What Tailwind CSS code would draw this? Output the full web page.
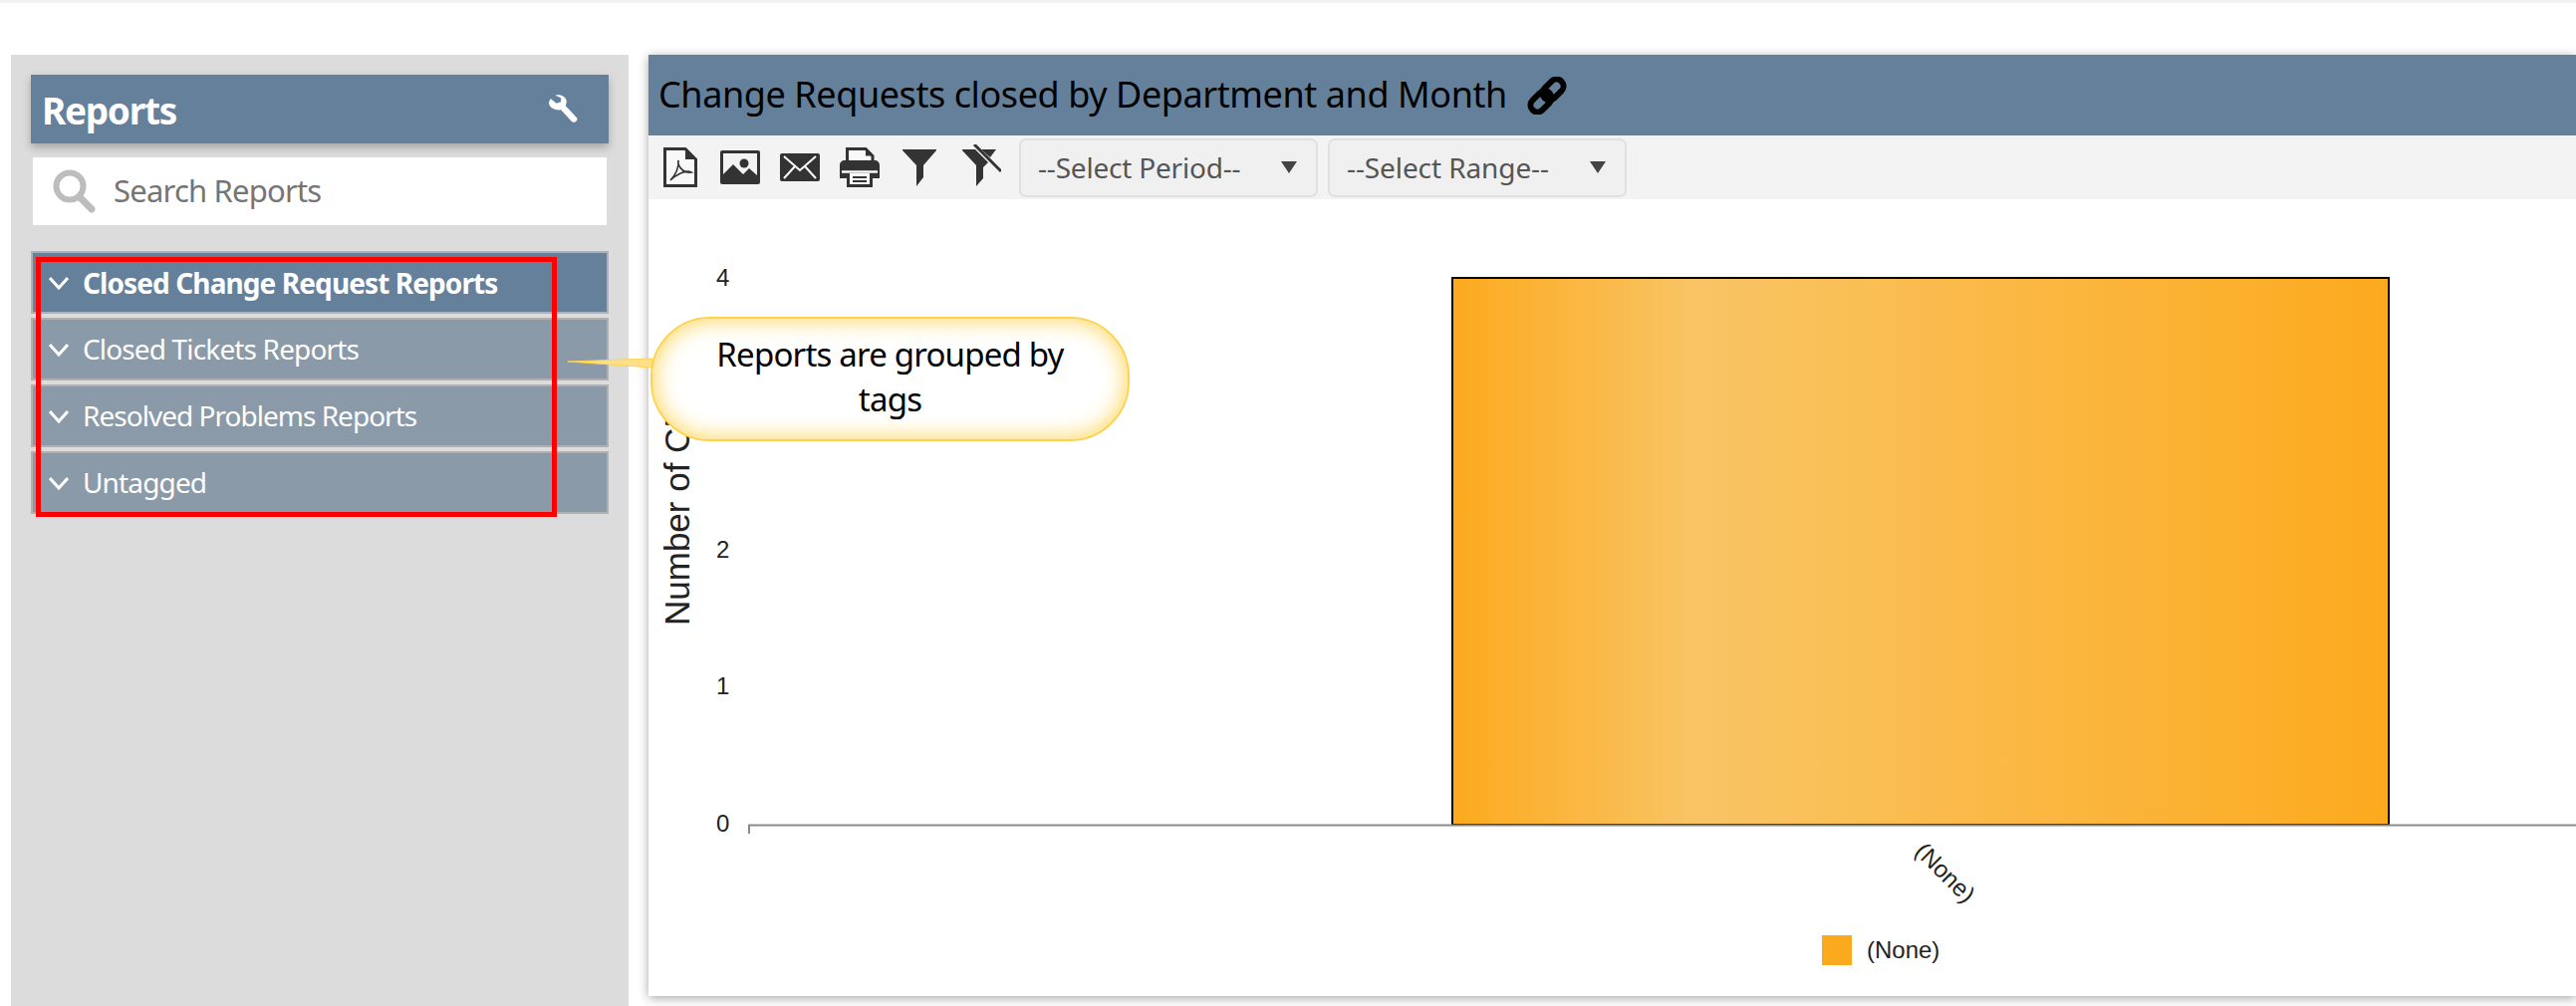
<!DOCTYPE html>
<html lang="en">
<head>
  <meta charset="UTF-8" />
  <title>Reports</title>
  <script src="https://cdn.jsdelivr.net/npm/@tailwindcss/browser@4"></script>
</head>
<body class="bg-white h-[1010px] w-[2586px] overflow-hidden relative font-['Noto_Sans',sans-serif]">
  <!-- top strip -->
  <div class="h-[3px] bg-[#f3f3f3]"></div>

  <div class="flex h-[1007px] pt-[52px] pl-[11px]">
    <!-- Sidebar -->
    <aside class="w-[620px] h-full flex-shrink-0 bg-[#dcdcdc] px-[20px] pt-[20px]">
      <div class="h-[69px] bg-[#64809b] shadow-[0_4px_8px_rgba(0,0,0,0.25)] flex items-center justify-between pl-[11px] pr-[31px]">
        <h1 class="text-white text-[37px] font-bold tracking-[-1.3px] pt-[2px]">Reports</h1>
        <svg width="30" height="29" viewBox="0 0 32 36" fill="#fff" preserveAspectRatio="none">
          <path d="M3 5 L9 11 L14 9 L14 4 L8 1 C13 -1 19 2 20 8 C20 11 19 13 19 14 L31 29 C32 31 31 33 29 34 C27 35 26 34 25 33 L14 19 C8 20 2 17 1 11 C1 9 2 7 3 5 Z" />
        </svg>
      </div>

      <div class="mt-[14px] mx-[2px] h-[68px] bg-white flex items-center pl-[20px]">
        <svg width="43" height="44" viewBox="0 0 43 44" fill="none" stroke="#bdbdbd">
          <circle cx="17" cy="17" r="13.5" stroke-width="6" />
          <path d="M27 28 L39 40" stroke-width="7" stroke-linecap="round" />
        </svg>
        <span class="ml-[18px] text-[31px] text-[#757575] tracking-[-0.8px] pb-[1px]">Search Reports</span>
      </div>

      <!-- report groups -->
      <div class="mt-[26px] flex flex-col gap-[4px]">
        <div class="h-[63px] bg-[#64809b] border-2 border-[#b0b0b0] flex items-center pl-[16px] text-white">
          <svg width="20" height="14" viewBox="0 0 20 14" fill="none" stroke="#fff" stroke-width="3"><path d="M1 2 L10 12 L19 2" /></svg>
          <span class="ml-[14px] text-[28px] font-bold tracking-[-0.9px]">Closed Change Request Reports</span>
        </div>
        <div class="h-[63px] bg-[#8a9aa9] border-2 border-[#b0b0b0] flex items-center pl-[16px] text-white">
          <svg width="20" height="14" viewBox="0 0 20 14" fill="none" stroke="#fff" stroke-width="3"><path d="M1 2 L10 12 L19 2" /></svg>
          <span class="ml-[14px] text-[28px] tracking-[-0.85px] pb-[2px]">Closed Tickets Reports</span>
        </div>
        <div class="h-[63px] bg-[#8a9aa9] border-2 border-[#b0b0b0] flex items-center pl-[16px] text-white">
          <svg width="20" height="14" viewBox="0 0 20 14" fill="none" stroke="#fff" stroke-width="3"><path d="M1 2 L10 12 L19 2" /></svg>
          <span class="ml-[14px] text-[28px] tracking-[-0.98px] pb-[2px]">Resolved Problems Reports</span>
        </div>
        <div class="h-[63px] bg-[#8a9aa9] border-2 border-[#b0b0b0] flex items-center pl-[16px] text-white">
          <svg width="20" height="14" viewBox="0 0 20 14" fill="none" stroke="#fff" stroke-width="3"><path d="M1 2 L10 12 L19 2" /></svg>
          <span class="ml-[14px] text-[28px] tracking-[-0.85px] pb-[2px]">Untagged</span>
        </div>
      </div>
    </aside>

    <!-- Main panel -->
    <main class="ml-[20px] flex-1 h-[945px] bg-white flex flex-col shadow-[0_2px_10px_rgba(0,0,0,0.35)]">
      <div class="h-[81px] bg-[#64809b] flex items-center pl-[10px]">
        <h2 class="text-[36px] text-black tracking-[-0.42px] pb-[2px]">Change Requests closed by Department and Month</h2>
        <svg class="ml-[20px]" width="40" height="38" viewBox="0 0 40 38" fill="none" stroke="#000">
          <rect x="14" y="6" width="24" height="14" rx="7" stroke-width="6" transform="rotate(-45 26 13)" />
          <rect x="2" y="18" width="24" height="14" rx="7" stroke-width="6" transform="rotate(-45 14 25)" />
          <path d="M16 22 L24 14" stroke-width="5" />
        </svg>
      </div>

      <div class="h-[64px] bg-[#f3f3f3] flex items-center pl-[15px]">
        <!-- pdf -->
        <svg class="w-[34px] h-[40px]" viewBox="0 0 34 40">
          <path d="M1.500 1.500 H22 L32.500 12 V38.500 H1.500 Z" fill="#f8f8f8" stroke="#333" stroke-width="3" />
          <path d="M22 1.500 V12 H32.500 Z" fill="#333" />
          <path d="M7 33 C12 28 16 20 15 13 C14 17 18 26 28 25 C22 22 12 28 7 33 Z" fill="none" stroke="#333" stroke-width="1.600" />
        </svg>
        <!-- image -->
        <svg class="ml-[23px] w-[40px] h-[34px]" viewBox="0 0 40 34">
          <path fill="#333" fill-rule="evenodd" d="M2 0 H38 A2 2 0 0 1 40 2 V32 A2 2 0 0 1 38 34 H2 A2 2 0 0 1 0 32 V2 A2 2 0 0 1 2 0 Z M3 3 V24 L13 14 L23 24 L29 18 L37 25 V3 Z" />
          <circle cx="24" cy="13" r="4.500" fill="#333" />
        </svg>
        <!-- mail -->
        <svg class="ml-[20px] w-[40px] h-[28px]" viewBox="0 0 40 28">
          <rect width="40" height="28" rx="2" fill="#333" />
          <path d="M4 3 L20 17 L36 3 M4 25 L15 13 M36 25 L25 13" fill="none" stroke="#fff" stroke-width="2" />
        </svg>
        <!-- printer -->
        <svg class="ml-[20px] w-[40px] h-[40px]" viewBox="0 0 40 40">
          <path d="M7.500 14 V1.500 H26 L33 8.500 V14" fill="#f8f8f8" stroke="#333" stroke-width="3" />
          <path d="M26 1.500 V8.500 H33 Z" fill="#333" />
          <path d="M5 13 H35 C38 13 40 15 40 18 V31 H33 V26 H7 V31 H0 V18 C0 15 2 13 5 13 Z" fill="#333" />
          <path d="M2 24.500 H38" stroke="#f8f8f8" stroke-width="2.500" />
          <path d="M8.500 26 V38.500 H31.500 V26" fill="#f8f8f8" stroke="#333" stroke-width="3" />
          <path d="M13 30 H27 M13 34 H27" stroke="#333" stroke-width="2" />
        </svg>
        <!-- filter -->
        <svg class="ml-[23px] w-[34px] h-[37px]" viewBox="0 0 34 37">
          <path fill="#333" d="M0 0 H34 V1 L21 16 V28 L14 37 V16 L0 1 Z" />
        </svg>
        <!-- filter off -->
        <svg class="ml-[26px] w-[39px] h-[42px] self-start mt-[9px]" viewBox="0 0 39 42">
          <path fill="#333" d="M0 5 H13 L26 18 L21 23 V34 L14 42 V21 L0 6 Z M19 5 H34 L28 13 Z" />
          <path d="M12 0 L39 27" stroke="#333" stroke-width="3" />
        </svg>

        <div class="ml-[18px] w-[300px] h-[59px] bg-[#f0f0f0] border-2 border-[#e0e0e0] rounded-[7px] flex items-center justify-between pl-[17px] pr-[19px]">
          <span class="text-[28px] text-[#555] tracking-[-0.2px]">--Select Period--</span>
          <span class="w-0 h-0 border-x-[8px] border-x-transparent border-t-[12px] border-t-[#444]"></span>
        </div>
        <div class="ml-[10px] w-[300px] h-[59px] bg-[#f0f0f0] border-2 border-[#e0e0e0] rounded-[7px] flex items-center justify-between pl-[17px] pr-[19px]">
          <span class="text-[28px] text-[#555] tracking-[-0.1px]">--Select Range--</span>
          <span class="w-0 h-0 border-x-[8px] border-x-transparent border-t-[12px] border-t-[#444]"></span>
        </div>
      </div>

      <!-- Chart: coordinates are relative to the panel's white area (651,200) -->
      <svg class="flex-1 w-full" viewBox="0 0 1935 800" font-family="Liberation Sans, sans-serif">
        <defs>
          <linearGradient id="barFill" x1="0" x2="1" y1="0" y2="0">
            <stop offset="0" stop-color="#fcaa1d" />
            <stop offset="0.26" stop-color="#f9c465" />
            <stop offset="1" stop-color="#fcaa1d" />
          </linearGradient>
        </defs>
        <rect x="807" y="79" width="940" height="549" fill="url(#barFill)" stroke="#000" stroke-width="2" />
        <path d="M101 637 V628.500 H1935" fill="none" stroke="#8a8a8a" stroke-width="2" />
        <text x="68" y="635" font-size="24" fill="#222">0</text>
        <text x="68" y="497" font-size="24" fill="#222">1</text>
        <text x="68" y="360" font-size="24" fill="#222">2</text>
        <text x="68" y="222" font-size="24" fill="#222">3</text>
        <text x="68" y="87" font-size="24" fill="#222">4</text>
        <text transform="translate(41 428) rotate(-90)" font-size="35" fill="#222">Number of CRs</text>
        <text transform="translate(1270 656) rotate(45)" font-size="24" fill="#222">(None)</text>
        <rect x="1178" y="739" width="30" height="30" fill="#fcaa1d" />
        <text x="1223" y="762" font-size="24" fill="#222">(None)</text>
      </svg>
    </main>
  </div>

  <!-- red highlight over the report groups -->
  <div class="absolute left-[36px] top-[258px] w-[523px] h-[261px] border-[5px] border-[#ff0000]"></div>

  <!-- callout -->
  <svg class="absolute left-[569px] top-[358px]" width="87" height="14" viewBox="0 0 87 14">
    <path d="M1 5 L86 2 V11 Z" fill="#ffe08a" stroke="#ffd24d" stroke-width="1" />
  </svg>
  <div class="absolute left-[653px] top-[318px] w-[481px] h-[125px] rounded-[60px] bg-white border-2 border-[#ffd24d] shadow-[inset_0_0_24px_#ffd24d] flex items-center justify-center text-center text-black text-[33px] leading-[45px] tracking-[-0.8px] pb-[5px]">
    Reports are grouped by<br />tags
  </div>
</body>
</html>
